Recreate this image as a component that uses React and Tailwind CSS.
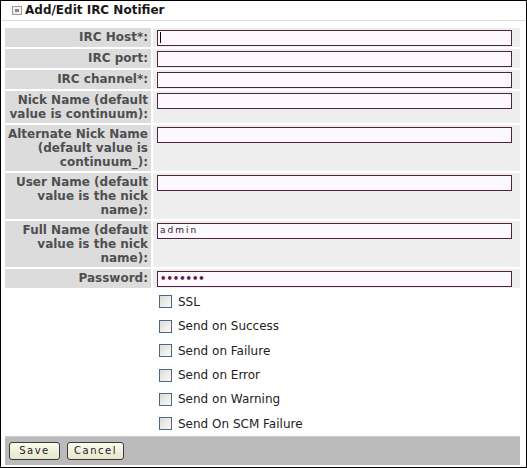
import React from 'react';

const fields = [
  { label: ['IRC Host*:'], value: '' },
  { label: ['IRC port:'], value: '' },
  { label: ['IRC channel*:'], value: '' },
  { label: ['Nick Name (default', 'value is continuum):'], value: '' },
  { label: ['Alternate Nick Name', '(default value is', 'continuum_):'], value: '' },
  { label: ['User Name (default', 'value is the nick', 'name):'], value: '' },
  { label: ['Full Name (default', 'value is the nick', 'name):'], value: 'admin' },
  { label: ['Password:'], value: '', password: true },
];

const options = ['SSL', 'Send on Success', 'Send on Failure', 'Send on Error', 'Send on Warning', 'Send On SCM Failure'];

function Checkbox() {
  return (
    <span className="w-[13px] h-[13px] border border-[#4a6785] bg-gradient-to-br from-[#dcdcd6] to-[#fbfbf8] shrink-0" />
  );
}

function Button({ children, width }) {
  return (
    <button
      className={`h-[18px] ${width} rounded-[3px] border border-[#3a3a3a] bg-gradient-to-b from-[#fbfbee] to-[#e6e6cc] text-[10px] tracking-[1.5px] text-[#222] leading-none`}
    >
      {children}
    </button>
  );
}

export default function App() {
  return (
    <div className="w-[527px] h-[468px] border border-black bg-white flex flex-col font-['DejaVu_Sans',Verdana,sans-serif] text-[12px] text-[#222]">
      {/* Title */}
      <div className="h-[20px] flex items-center border-b border-[#dcdcdc] pl-[11px] gap-[3px]">
        <span className="w-[10px] h-[9px] border border-[#9a9a9a] bg-[#f2f2f2] flex items-center justify-center">
          <span className="w-[4px] h-[3px] bg-[#8a8a8a]" />
        </span>
        <span className="font-bold text-[12px] text-[#1a1a1a]">Add/Edit IRC Notifier</span>
      </div>

      <div className="flex-1 flex flex-col pl-[4px] pr-[6px] pt-[7px] pb-[2px]">
        {/* Fields */}
        <div className="grid grid-cols-[146px_1fr] gap-x-[2px] gap-y-[2px]">
          {fields.map((f, i) => (
            <React.Fragment key={i}>
              <div className="bg-[#dcdcdc] text-right pr-[3px] py-[2px] font-bold text-[#4f4f4f] leading-[14px] flex flex-col justify-start">
                {f.label.map((l, j) => (
                  <span key={j}>{l}</span>
                ))}
              </div>
              <div className="bg-[#eeeeee] pl-[4px] pr-[8px] pt-[2px] pb-[1px]">
                <div className="h-[16px] border border-[#4d2444] bg-[#fdf8fc] flex items-center px-[2px]">
                  {i === 0 && <span className="w-px h-[11px] bg-black" />}
                  {f.value && (
                    <span className="text-[9px] tracking-[2px] text-[#2a1a26]">{f.value}</span>
                  )}
                  {f.password && (
                    <span className="text-[10px] tracking-[0px] text-[#5a1a4c] leading-none font-bold">•••••••</span>
                  )}
                </div>
              </div>
            </React.Fragment>
          ))}
        </div>

        {/* Options */}
        <div className="pl-[154px] pt-[2px] flex flex-col">
          {options.map((o) => (
            <div key={o} className="h-[24.4px] flex items-center gap-[6px]">
              <Checkbox />
              <span className="text-[12px] text-[#222]">{o}</span>
            </div>
          ))}
        </div>

        {/* Footer */}
        <div className="mt-auto h-[29px] bg-[#bbbbbb] border-t border-[#cdcdcd] flex items-center gap-[7px] pl-[4px]">
          <Button width="w-[51px]">Save</Button>
          <Button width="w-[57px]">Cancel</Button>
        </div>
      </div>
    </div>
  );
}
